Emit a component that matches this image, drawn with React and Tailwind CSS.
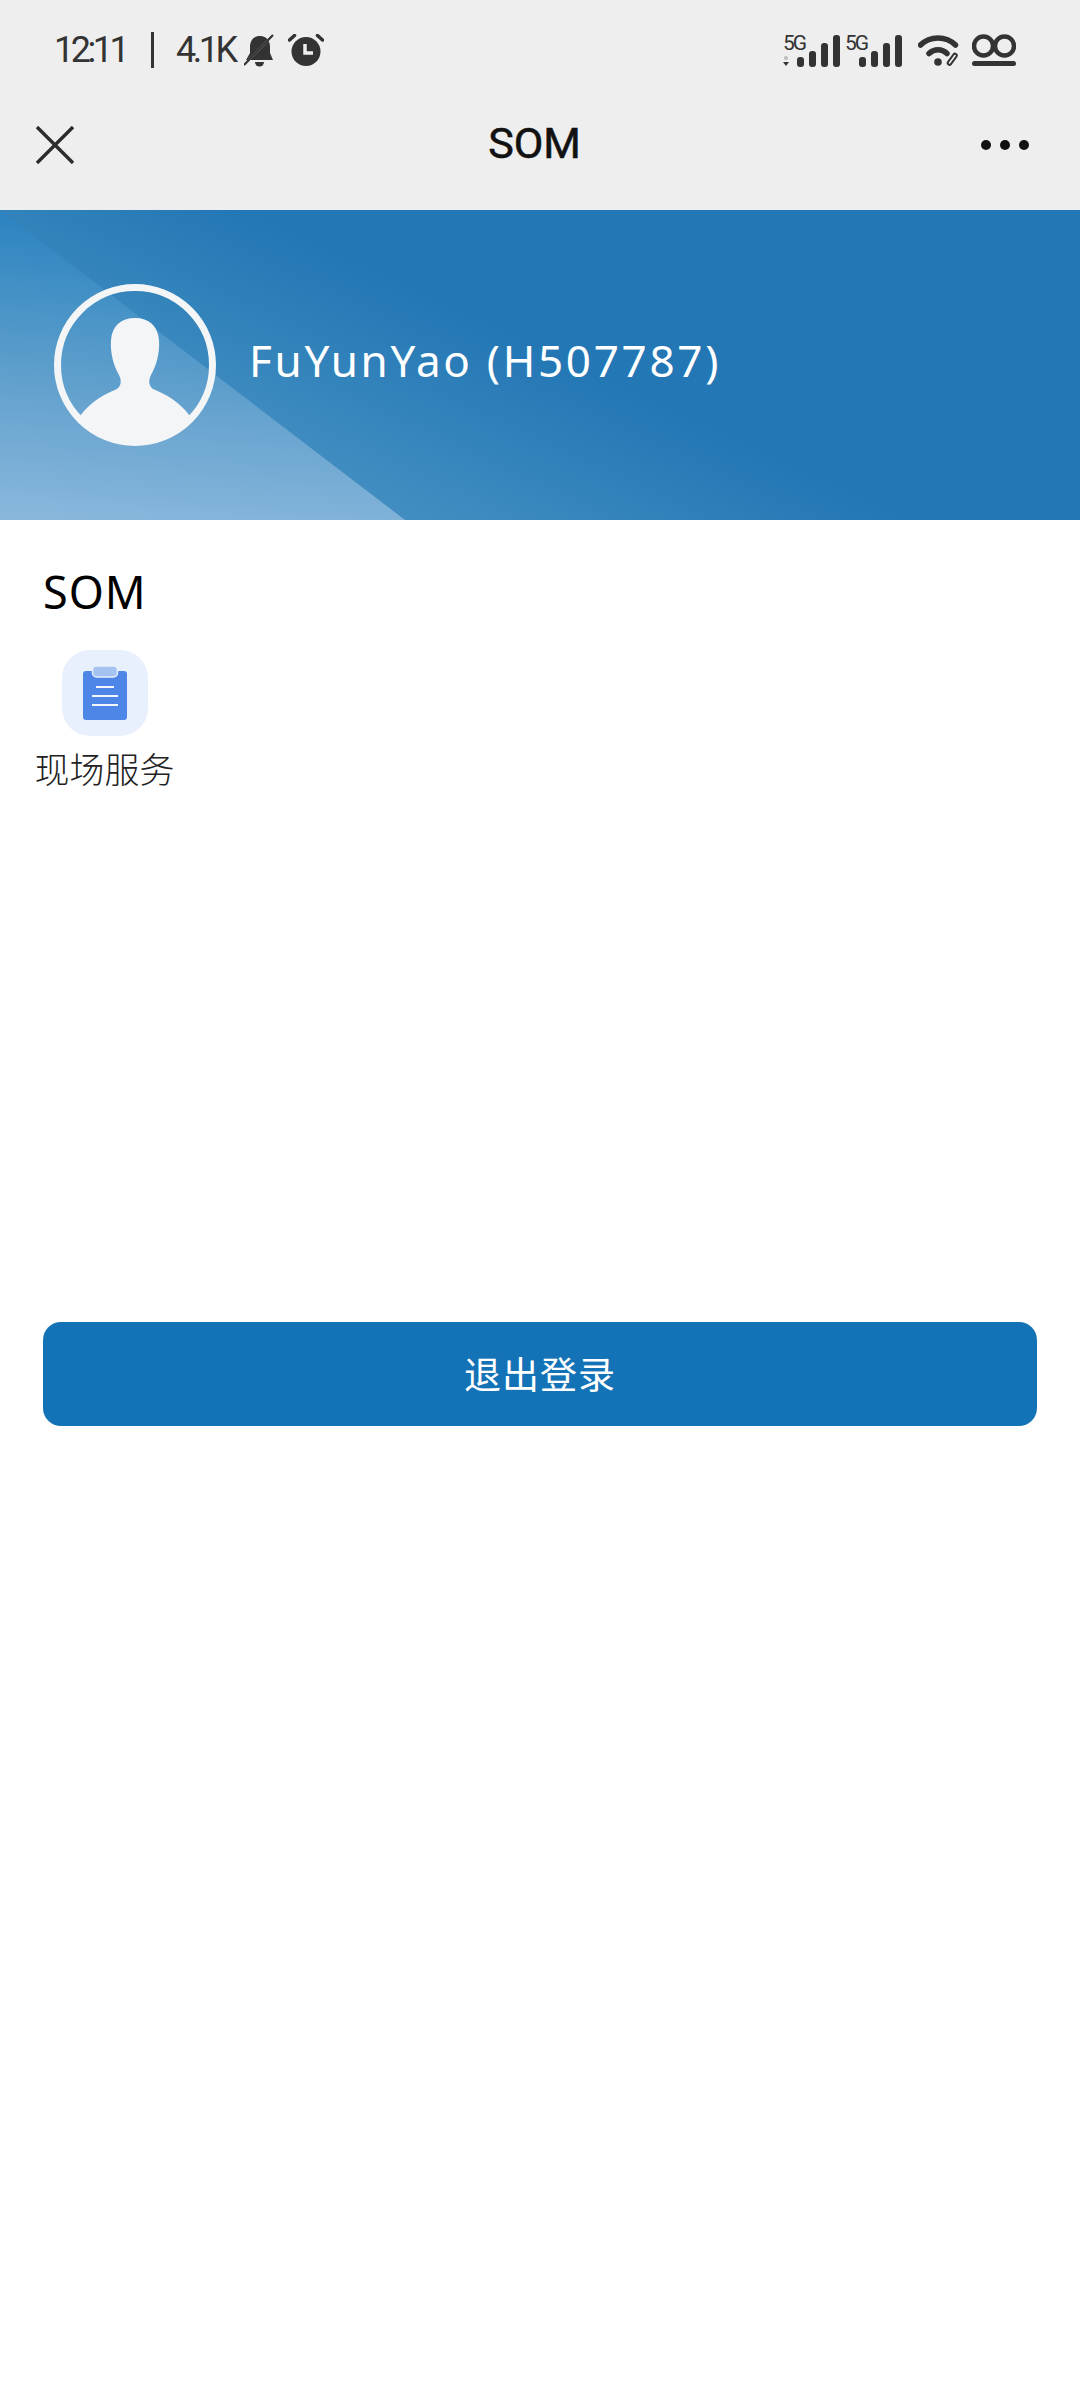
import * as React from "react";

export default function App() {
  return (
    <div className="w-[1080px] h-[2400px] bg-white font-['Roboto','Noto_Sans_CJK_SC',sans-serif] overflow-hidden">
      <div className="h-[210px] bg-[#eeeeee]">
        <StatusBar />
        <NavBar />
      </div>
      <Banner />
      <div className="pl-[43px] pt-[45px] h-[802px]">
        <h2 className="text-[45px] leading-[54px] text-black font-['Noto_Sans',sans-serif] font-normal tracking-[1px]">SOM</h2>
        <div className="w-[137px] -ml-[7px] mt-[31px] flex flex-col items-center">
          <div className="w-[86px] h-[86px] rounded-[28px] bg-[#e8f0fd] flex items-center justify-center">
            <Clipboard />
          </div>
          <div className="mt-[10px] text-[35px] leading-[44px] text-[#222222] font-light whitespace-nowrap font-['Noto_Sans_CJK_SC',sans-serif]">现场服务</div>
        </div>
      </div>
      <div className="px-[43px]">
        <button className="w-full h-[104px] rounded-[18px] bg-[#1473b7] text-white text-[37px] tracking-[1px] font-['Noto_Sans_CJK_SC',sans-serif] flex items-center justify-center">退出登录</button>
      </div>
    </div>
  );
}

function StatusBar() {
  return (
    <div className="h-[90px] pt-[10px] pl-[54px] pr-[64px] flex items-center justify-between text-[#333333]">
      <div className="flex items-center">
        <span className="text-[36px] leading-none tracking-[-3.5px] w-[97px] font-normal">12:11</span>
        <span className="w-[3px] h-[36px] bg-[#333333]" />
        <span className="ml-[22px] w-[69px] text-[36px] leading-none tracking-[-3.5px]">4.1K</span>
        <BellOff />
        <Alarm />
      </div>
      <div className="flex items-center">
        <Signal dot />
        <Signal className="ml-[3px]" />
        <Wifi />
        <Voicemail />
      </div>
    </div>
  );
}

function NavBar() {
  return (
    <div className="h-[110px] pl-[36px] pr-[51px] flex items-center justify-between">
      <svg width="38" height="38" viewBox="0 0 38 38" fill="none" stroke="#2c2c2c" strokeWidth="3.4">
        <path d="M1 1L37 37M37 1L1 37" />
      </svg>
      <div className="ml-[14px] -mt-[4px] text-[43px] leading-none text-[#111111] font-['Roboto',sans-serif] [-webkit-text-stroke:0.6px_#111111]">SOM</div>
      <div className="flex gap-[9px]">
        <span className="w-[10px] h-[10px] rounded-full bg-[#111111]" />
        <span className="w-[10px] h-[10px] rounded-full bg-[#111111]" />
        <span className="w-[10px] h-[10px] rounded-full bg-[#111111]" />
      </div>
    </div>
  );
}

function Banner() {
  return (
    <div className="relative h-[310px] pl-[54px] flex items-center bg-[linear-gradient(205deg,#2377b5_0%,#2377b5_48%,#3f8cc0_74%,#5f9fca_100%)]">
      <div className="absolute inset-0 bg-[linear-gradient(5deg,#8ab8dc_0%,#6aa5d0_28%,#4692c6_55%,#2a82c0_78%,#1d7cc0_100%)] [clip-path:polygon(0_0,405px_100%,0_100%)]" />
      <svg className="relative" width="162" height="162" viewBox="0 0 162 162">
        <circle cx="81" cy="81" r="77.5" fill="none" stroke="#f4f5f7" strokeWidth="7" />
        <path fill="#f4f5f7" d="M81 34c-14 0-23 8-24 22-1 14 3 26 8 35 3 6 2 11-2 14-12 5-26 12-37 27 14 17 34 28 55 28s41-11 55-28c-11-15-25-22-37-27-4-3-5-8-2-14 5-9 9-21 8-35-1-14-10-22-24-22z" />
      </svg>
      <div className="relative ml-[33px] -mt-[10px] text-[44px] leading-none text-white tracking-[2.7px] font-['Noto_Sans',sans-serif]">FuYunYao (H507787)</div>
    </div>
  );
}

function Clipboard() {
  return (
    <svg width="44" height="54" viewBox="0 0 44 54">
      <rect x="0" y="5" width="44" height="49" rx="3" fill="#4d86e6" />
      <rect x="9.5" y="0" width="25" height="11" rx="4" fill="#a4c3f1" stroke="#e8f0fd" strokeWidth="1.5" />
      <path d="M13 21h18M9 30h26M9 39h26" stroke="#f2f6fe" strokeWidth="2" />
    </svg>
  );
}

function Signal({ dot, className = "" }) {
  return (
    <svg className={`overflow-visible ${className}`} width="59" height="36" viewBox="0 0 59 36">
      <text x="0" y="18" fontSize="21" fill="#333333" fontFamily="Roboto" letterSpacing="-2">5G</text>
      {dot && <circle cx="3" cy="26" r="2" fill="#bbbbbb" />}
      {dot && <path d="M0 30h6l-3 4z" fill="#333333" />}
      <rect x="14" y="25" width="7" height="10" rx="3" fill="#333333" />
      <rect x="26" y="19" width="7" height="16" rx="3" fill="#333333" />
      <rect x="38" y="11" width="7" height="24" rx="3" fill="#333333" />
      <rect x="50" y="3" width="7" height="32" rx="3" fill="#333333" />
    </svg>
  );
}

function Wifi() {
  return (
    <svg className="ml-[14px]" width="42" height="32" viewBox="0 0 42 32" fill="none">
      <path d="M2.5 11C12 1.5 28 1.5 37.5 11" stroke="#333333" strokeWidth="5.5" strokeLinecap="round" />
      <path d="M11 19.5c5-5 13-5 18 0" stroke="#333333" strokeWidth="5.5" strokeLinecap="round" />
      <circle cx="20" cy="28" r="3.8" fill="#333333" />
      <path d="M31.5 29l5.5-7.5" stroke="#333333" strokeWidth="5.5" strokeLinecap="round" />
      <path d="M31.5 29l5.5-7.5" stroke="#eeeeee" strokeWidth="1.6" strokeLinecap="round" />
    </svg>
  );
}

function Voicemail() {
  return (
    <svg className="ml-[12px]" width="44" height="32" viewBox="0 0 44 32" fill="none">
      <circle cx="11.5" cy="12" r="9.5" stroke="#333333" strokeWidth="4.5" />
      <circle cx="32.5" cy="12" r="9.5" stroke="#333333" strokeWidth="4.5" />
      <rect x="0" y="27" width="44" height="5" rx="2.5" fill="#333333" />
    </svg>
  );
}

function BellOff() {
  return (
    <svg className="-ml-[1px]" width="31" height="33" viewBox="0 0 31 33">
      <path fill="#333333" d="M16 2c-7 0-10 5-10 11v6l-4 7h27l-3-7v-6c0-6-3-11-10-11z" />
      <path fill="#333333" d="M11 28h9a4.5 4.5 0 0 1-9 0z" />
      <path d="M3 28L27 3" stroke="#eeeeee" strokeWidth="2" />
      <path d="M0 31L29 1" stroke="#333333" strokeWidth="2.2" />
    </svg>
  );
}

function Alarm() {
  return (
    <svg className="ml-[13px]" width="36" height="32" viewBox="0 0 36 32">
      <circle cx="18" cy="17.5" r="14.5" fill="#333333" />
      <path d="M1.5 6l5-4.5" stroke="#333333" strokeWidth="3.5" strokeLinecap="round" />
      <path d="M34.5 6l-5-4.5" stroke="#333333" strokeWidth="3.5" strokeLinecap="round" />
      <path d="M17 10v9h8" stroke="#eeeeee" strokeWidth="3.5" fill="none" />
    </svg>
  );
}
